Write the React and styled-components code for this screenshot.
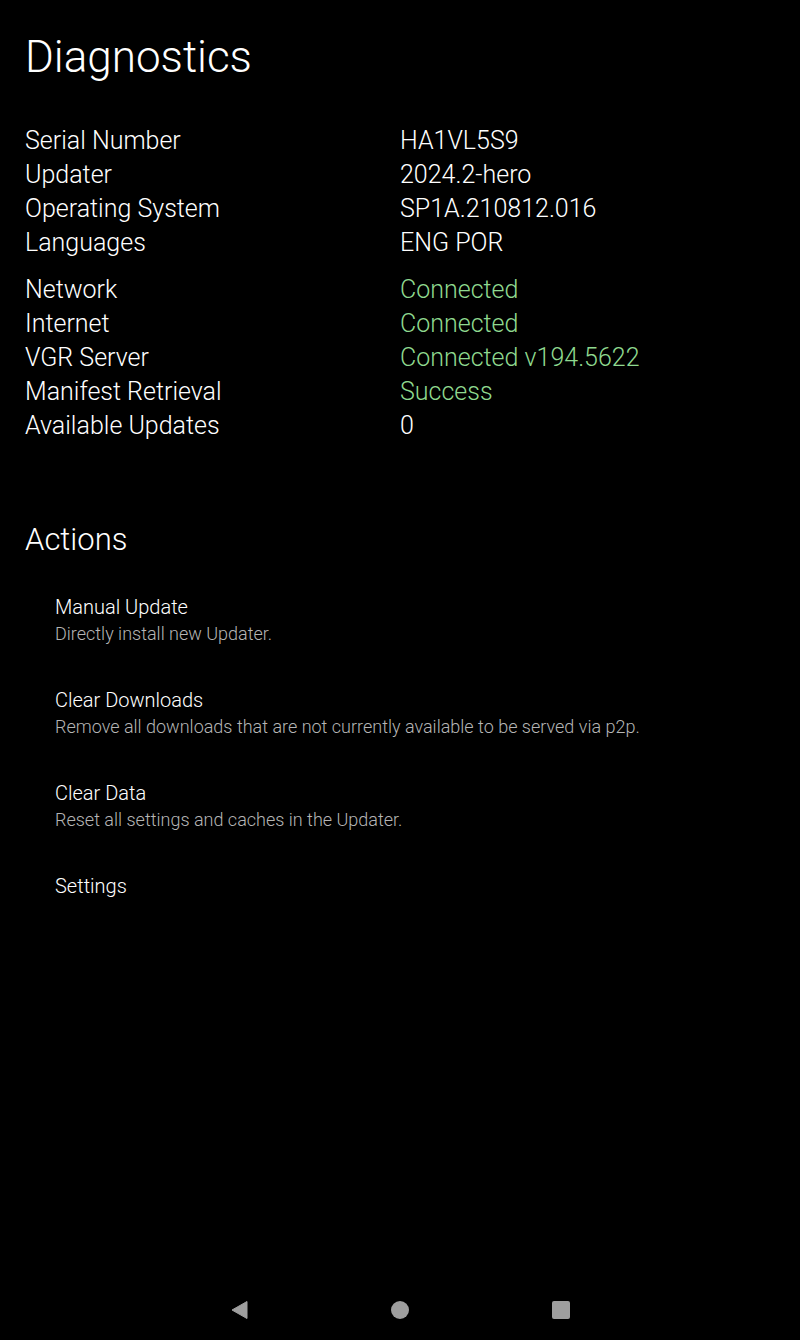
import styled, { createGlobalStyle } from "styled-components";

const GlobalStyle = createGlobalStyle`
  html, body {
    margin: 0;
    padding: 0;
    background: #000;
  }
  body {
    font-family: Roboto, "Noto Sans", sans-serif;
    color: #fff;
  }
`;

const info = [
  { label: "Serial Number", value: "HA1VL5S9" },
  { label: "Updater", value: "2024.2-hero" },
  { label: "Operating System", value: "SP1A.210812.016" },
  { label: "Languages", value: "ENG POR" },
];

const status = [
  { label: "Network", value: "Connected", ok: true },
  { label: "Internet", value: "Connected", ok: true },
  { label: "VGR Server", value: "Connected v194.5622", ok: true },
  { label: "Manifest Retrieval", value: "Success", ok: true },
  { label: "Available Updates", value: "0" },
];

const actions = [
  { title: "Manual Update", desc: "Directly install new Updater." },
  {
    title: "Clear Downloads",
    desc: "Remove all downloads that are not currently available to be served via p2p.",
  },
  { title: "Clear Data", desc: "Reset all settings and caches in the Updater." },
  { title: "Settings" },
];

export default function App() {
  return (
    <>
      <GlobalStyle />
      <StyledScreen>
        <StyledContent>
          <StyledTitle>Diagnostics</StyledTitle>
          <StyledTable>
            {info.map((row) => (
              <StyledRow key={row.label}>
                <span>{row.label}</span>
                <StyledValue>{row.value}</StyledValue>
              </StyledRow>
            ))}
          </StyledTable>
          <StyledTable $gap>
            {status.map((row) => (
              <StyledRow key={row.label}>
                <span>{row.label}</span>
                <StyledValue $ok={row.ok}>{row.value}</StyledValue>
              </StyledRow>
            ))}
          </StyledTable>
          <StyledHeading>Actions</StyledHeading>
          <StyledActions>
            {actions.map((action) => (
              <StyledAction key={action.title}>
                <StyledActionTitle>{action.title}</StyledActionTitle>
                {action.desc && <StyledActionDesc>{action.desc}</StyledActionDesc>}
              </StyledAction>
            ))}
          </StyledActions>
        </StyledContent>
        <StyledNavBar>
          <svg width="20" height="20" viewBox="0 0 20 20">
            <path d="M18 1.5 L18 18.5 L3 10 Z" fill="#9e9e9e" strokeLinejoin="round" stroke="#9e9e9e" strokeWidth="1" />
          </svg>
          <svg width="20" height="20" viewBox="0 0 20 20">
            <circle cx="10" cy="10" r="9" fill="#9e9e9e" />
          </svg>
          <svg width="20" height="20" viewBox="0 0 20 20">
            <rect x="1" y="1" width="18" height="18" rx="2" fill="#9e9e9e" />
          </svg>
        </StyledNavBar>
      </StyledScreen>
    </>
  );
}

const StyledScreen = styled.div`
  min-height: 100vh;
  display: flex;
  flex-direction: column;
`;

const StyledContent = styled.main`
  flex: 1;
  padding: 30px 25px 0;
`;

const StyledTitle = styled.h1`
  margin: 0;
  font-weight: 300;
  font-size: 44px;
  line-height: 54px;
`;

const StyledTable = styled.div`
  margin-top: ${(props) => (props.$gap ? "13px" : "40px")};
  display: flex;
  flex-direction: column;
`;

const StyledRow = styled.div`
  display: grid;
  grid-template-columns: 375px 1fr;
  font-size: 25px;
  line-height: 34px;
  font-weight: 300;
`;

const StyledValue = styled.span`
  color: ${(props) => (props.$ok ? "#8fd98f" : "#fff")};
`;

const StyledHeading = styled.h2`
  margin: 77px 0 0;
  font-weight: 300;
  font-size: 31px;
  line-height: 40px;
`;

const StyledActions = styled.div`
  margin-top: 34px;
  padding-left: 30px;
  display: flex;
  flex-direction: column;
  gap: 40px;
`;

const StyledAction = styled.div`
  display: flex;
  flex-direction: column;
  height: 53px;
`;

const StyledActionTitle = styled.div`
  font-size: 20px;
  line-height: 26px;
  font-weight: 300;
`;

const StyledActionDesc = styled.div`
  font-size: 18px;
  line-height: 27px;
  color: #b5b5b5;
  font-weight: 300;
`;

const StyledNavBar = styled.nav`
  height: 60px;
  display: flex;
  justify-content: center;
  align-items: center;
  gap: 141px;
`;
